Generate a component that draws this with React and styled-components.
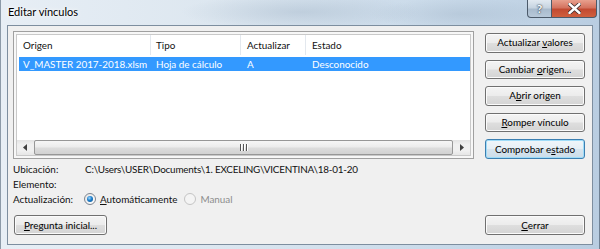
import React from 'react'
import styled, { createGlobalStyle, css } from 'styled-components'

const GlobalStyle = createGlobalStyle`
  html, body {
    margin: 0;
    padding: 0;
  }
  body {
    width: 600px;
    height: 249px;
    overflow: hidden;
    background: #cfdbe6;
    font-family: 'Segoe UI', Lato, 'Noto Sans', sans-serif;
    font-size: 9.9px;
    color: #000;
  }
`

const Window = styled.div`
  box-sizing: border-box;
  width: 600px;
  height: 249px;
  display: flex;
  flex-direction: column;
  padding: 0 6px 4px 6px;
  background:
    radial-gradient(ellipse 120px 18px at 300px 12px, rgba(150, 170, 190, 0.35), transparent),
    radial-gradient(ellipse 90px 16px at 460px 14px, rgba(150, 170, 190, 0.3), transparent),
    linear-gradient(90deg, #e7eef5 0%, #dde7f0 35%, #cbdbea 70%, #b9cde1 100%);
  border-left: 1px solid #8c9aa8;
  border-right: 1px solid #6f8194;
`

const TitleBar = styled.div`
  height: 25px;
  display: flex;
  align-items: flex-start;
  justify-content: space-between;
`

const Title = styled.div`
  margin: 5px 0 0 1px;
  font-size: 11px;
  color: #000;
  text-shadow: 0 0 6px #fff, 0 0 3px #fff;
`

const Caption = styled.div`
  display: flex;
  margin-right: -4px;
`

const CaptionButton = styled.div`
  box-sizing: border-box;
  height: 18px;
  width: ${p => p.$w}px;
  display: flex;
  align-items: center;
  justify-content: center;
  border: 1px solid #4c5a6a;
  border-top: none;
  color: #fff;
  font-weight: bold;
  font-size: 12px;
  text-shadow: 0 0 2px #2a3644, 0 0 1px #2a3644;
  ${p => p.$close ? css`
    border-radius: 0 0 4px 0;
    border-left: none;
    background: linear-gradient(#e8a08e 0%, #d4735f 45%, #c24a32 55%, #d0603e 100%);
  ` : css`
    border-radius: 0 0 0 4px;
    background: linear-gradient(#e1e9f1 0%, #c7d4e1 45%, #a9bbcd 55%, #b8c9da 100%);
  `}
`

const Client = styled.div`
  flex: 1;
  display: flex;
  flex-direction: column;
  border: 1px solid #7d8e9f;
  background: #f0f0f0;
  padding: 5px 7px 9px 5px;
`

const TopRow = styled.div`
  height: 128px;
  display: flex;
  gap: 11px;
`

const ListFrame = styled.div`
  flex: 1;
  box-sizing: border-box;
  display: flex;
  flex-direction: column;
  border: 1px solid #a0a0a0;
  background: #fff;
  padding: 2px;
  box-shadow: inset 0 0 0 2px #f7f7f7;
`

const ListInner = styled.div`
  flex: 1;
  display: flex;
  flex-direction: column;
  border: 1px solid #c9c9c9;
  background: #fff;
`

const Header = styled.div`
  display: flex;
  height: 20px;
`

const HeadCell = styled.div`
  box-sizing: border-box;
  width: ${p => (p.$w ? `${p.$w}px` : 'auto')};
  flex: ${p => (p.$w ? 'none' : '1')};
  padding-left: ${p => p.$pad}px;
  line-height: 20px;
  border-right: ${p => (p.$w ? '1px solid #e3e8ee' : 'none')};
  color: #111;
`

const Row = styled.div`
  display: flex;
  height: 14px;
  margin: 2px 0 0 2px;
  background: #3399ff;
  color: #fff;
`

const Cell = styled.div`
  box-sizing: border-box;
  width: ${p => (p.$w ? `${p.$w}px` : 'auto')};
  flex: ${p => (p.$w ? 'none' : '1')};
  padding-left: ${p => p.$pad}px;
  line-height: 14px;
  white-space: nowrap;
`

const ListBody = styled.div`
  flex: 1;
`

const ScrollBar = styled.div`
  height: 15px;
  display: flex;
  align-items: stretch;
  background: linear-gradient(#e3e3e3, #f0f0f0 30%, #f0f0f0 70%, #e6e6e6);
`

const Arrow = styled.div`
  width: 16px;
  display: flex;
  align-items: center;
  justify-content: center;
`

const Thumb = styled.div`
  flex: 1;
  margin: 0 1px;
  border: 1px solid #979797;
  border-radius: 2px;
  background: linear-gradient(#f6f6f6 0%, #ececec 45%, #dcdcdc 55%, #d2d2d2 100%);
  display: flex;
  align-items: center;
  justify-content: center;
  gap: 2px;
`

const Grip = styled.span`
  width: 1px;
  height: 7px;
  background: #555;
  box-shadow: 1px 0 0 #fff;
`

const ButtonColumn = styled.div`
  width: 100px;
  display: flex;
  flex-direction: column;
  gap: 7px;
  padding-top: 2px;
`

const Button = styled.button`
  box-sizing: border-box;
  width: ${p => p.$w}px;
  height: 20px;
  padding: 0;
  border: 1px solid #707070;
  border-radius: 3px;
  background: linear-gradient(#f4f4f4 0%, #ececec 48%, #dedede 52%, #d4d4d4 100%);
  box-shadow: inset 0 0 0 1px #fbfbfb;
  font: inherit;
  color: #000;
  line-height: 17px;
  text-align: center;
  ${p => p.$default && css`
    border-color: #3c7fb1;
    box-shadow: inset 0 0 0 1px #9fdcf8;
    background: linear-gradient(#f0f6fa 0%, #e6eff5 48%, #d6e4ee 52%, #cddde9 100%);
  `}
`

const Key = styled.span`
  text-decoration: underline;
  text-underline-offset: 1px;
`

const Info = styled.div`
  margin-top: 2px;
  display: grid;
  grid-template-columns: 72px 1fr;
  grid-template-rows: 15px 15px 16px;
  align-items: center;
  color: #111;
`

const Value = styled.div`
  white-space: nowrap;
  display: flex;
  align-items: center;
  letter-spacing: ${p => (p.$tight ? '-0.2px' : 'normal')};
`

const RadioLabel = styled.label`
  display: flex;
  align-items: center;
  gap: 4px;
  margin-left: -1px;
  margin-right: 8px;
  color: ${p => (p.$disabled ? '#8d8d8d' : '#111')};
`

const RadioDot = styled.span`
  box-sizing: border-box;
  width: 12px;
  height: 12px;
  border-radius: 50%;
  border: 1px solid ${p => (p.$disabled ? '#c4c4c4' : '#7d8590')};
  background: ${p => (p.$disabled ? '#f4f4f4' : 'linear-gradient(135deg, #e6e6e6, #ffffff)')};
  display: flex;
  align-items: center;
  justify-content: center;
  &::after {
    content: '';
    display: ${p => (p.$checked ? 'block' : 'none')};
    width: 6px;
    height: 6px;
    border-radius: 50%;
    background: radial-gradient(circle at 40% 35%, #9fd8ff 0%, #1c7ecb 45%, #0d4f8c 100%);
  }
`

const Footer = styled.div`
  margin-top: 8px;
  display: flex;
  justify-content: space-between;
  padding-left: 1px;
`

const cols = [
  { w: 134, pad: 6 },
  { w: 90, pad: 5 },
  { w: 65, pad: 6 },
  { w: 0, pad: 6 },
]

export default function App() {
  return (
    <>
      <GlobalStyle />
      <Window>
        <TitleBar>
          <Title>Editar vínculos</Title>
          <Caption>
            <CaptionButton $w={25}>?</CaptionButton>
            <CaptionButton $w={45} $close>
              <svg width="13" height="11" viewBox="0 0 13 11">
                <path d="M1.5 1 L11.5 10 M11.5 1 L1.5 10" stroke="#3a2a2a" strokeWidth="4" strokeLinecap="round" />
                <path d="M1.5 1 L11.5 10 M11.5 1 L1.5 10" stroke="#fff" strokeWidth="2.4" strokeLinecap="round" />
              </svg>
            </CaptionButton>
          </Caption>
        </TitleBar>
        <Client>
          <TopRow>
            <ListFrame>
              <ListInner>
                <Header>
                  {['Origen', 'Tipo', 'Actualizar', 'Estado'].map((h, i) => (
                    <HeadCell key={h} $w={cols[i].w} $pad={cols[i].pad}>{h}</HeadCell>
                  ))}
                </Header>
                <Row>
                  {['V_MASTER 2017-2018.xlsm', 'Hoja de cálculo', 'A', 'Desconocido'].map((c, i) => (
                    <Cell key={c} $w={i === 0 ? cols[0].w - 2 : cols[i].w} $pad={cols[i].pad - (i === 0 ? 2 : 0)}>{c}</Cell>
                  ))}
                </Row>
                <ListBody />
                <ScrollBar>
                  <Arrow>
                    <svg width="4" height="7" viewBox="0 0 4 7"><path d="M4 0 L0 3.5 L4 7 Z" fill="#404040" /></svg>
                  </Arrow>
                  <Thumb>
                    <Grip /><Grip /><Grip />
                  </Thumb>
                  <Arrow>
                    <svg width="4" height="7" viewBox="0 0 4 7"><path d="M0 0 L4 3.5 L0 7 Z" fill="#404040" /></svg>
                  </Arrow>
                </ScrollBar>
              </ListInner>
            </ListFrame>
            <ButtonColumn>
              <Button $w={100}>Actualizar <Key>v</Key>alores</Button>
              <Button $w={100}>Cambiar <Key>o</Key>rigen...</Button>
              <Button $w={100}>A<Key>b</Key>rir origen</Button>
              <Button $w={100}><Key>R</Key>omper vínculo</Button>
              <Button $w={100} $default>Comprobar e<Key>s</Key>tado</Button>
            </ButtonColumn>
          </TopRow>
          <Info>
            <div>Ubicación:</div>
            <Value $tight>C:\Users\USER\Documents\1. EXCELING\VICENTINA\18-01-20</Value>
            <div>Elemento:</div>
            <Value />
            <div>Actualización:</div>
            <Value>
              <RadioLabel>
                <RadioDot $checked />
                <span><Key>A</Key>utomáticamente</span>
              </RadioLabel>
              <RadioLabel $disabled>
                <RadioDot $disabled />
                <span>Manual</span>
              </RadioLabel>
            </Value>
          </Info>
          <Footer>
            <Button $w={93}><Key>P</Key>regunta inicial...</Button>
            <Button $w={100}><Key>C</Key>errar</Button>
          </Footer>
        </Client>
      </Window>
    </>
  )
}
